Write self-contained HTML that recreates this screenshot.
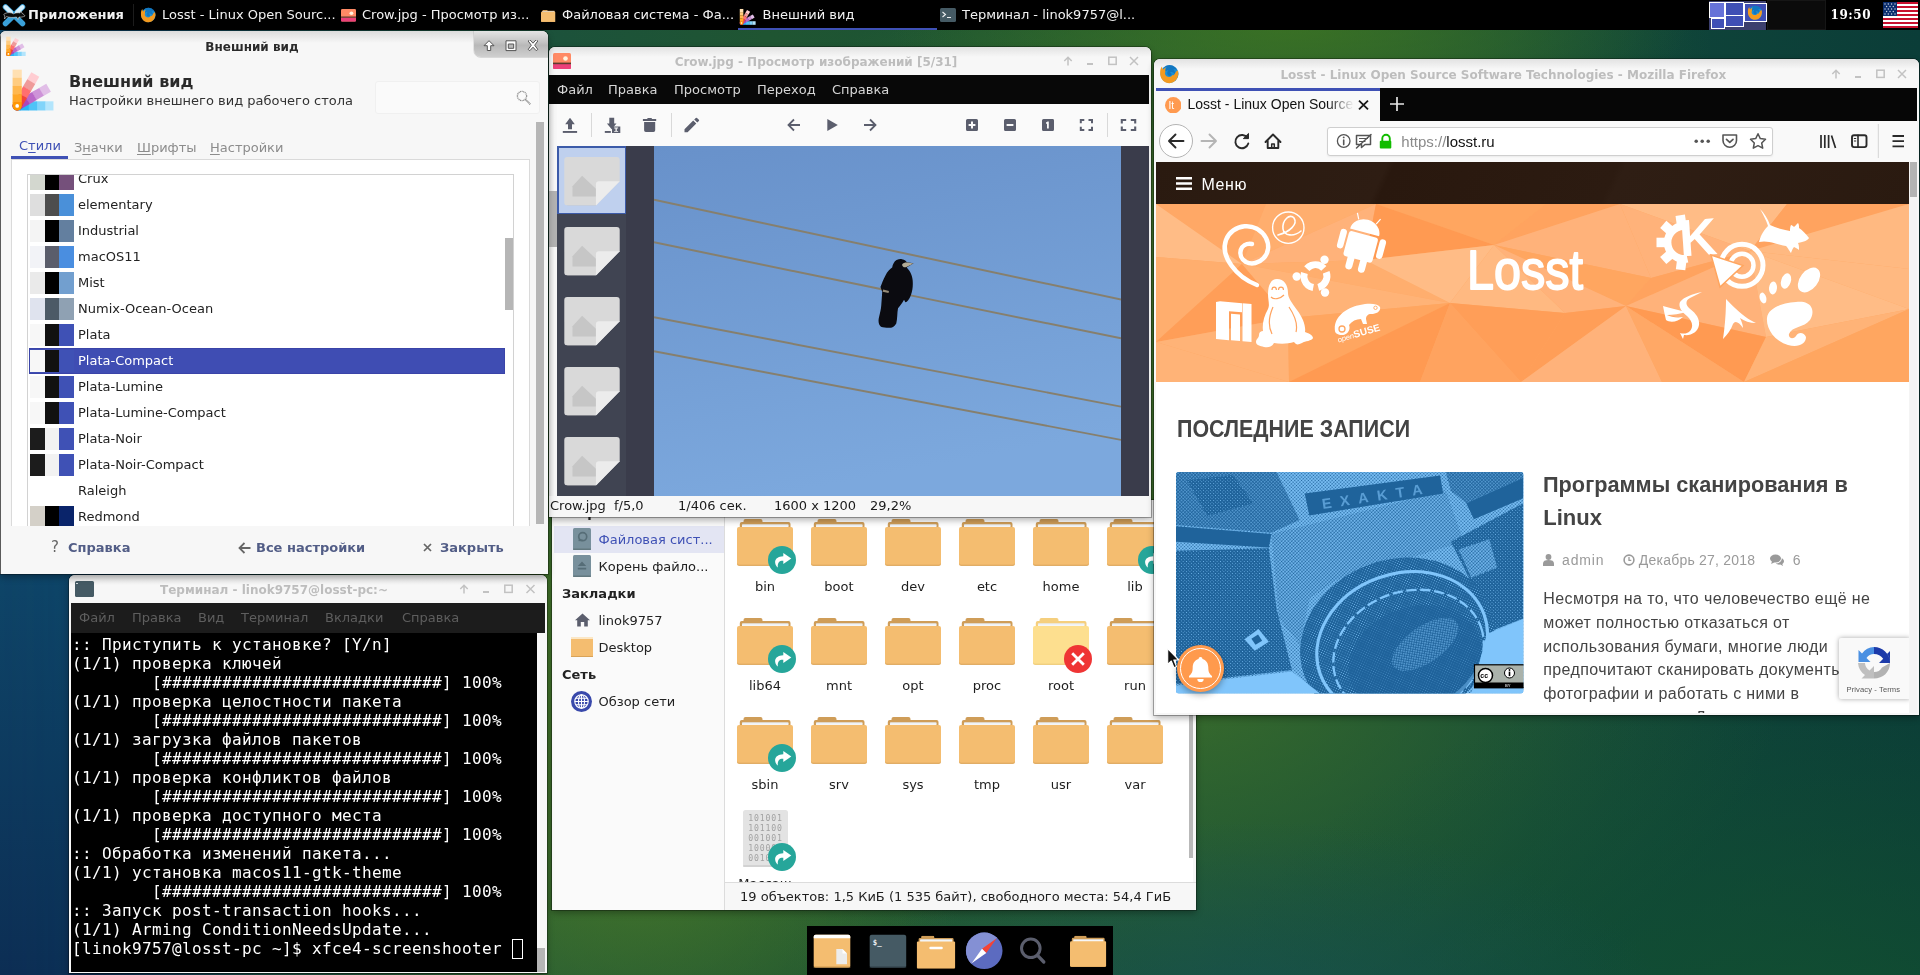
<!DOCTYPE html>
<html lang="ru">
<head>
<meta charset="utf-8">
<title>Desktop</title>
<style>
*{box-sizing:border-box;margin:0;padding:0}
html,body{width:1920px;height:975px;overflow:hidden}
body{position:relative;font-family:"DejaVu Sans","Liberation Sans",sans-serif;font-size:13px;color:#222;
 background:#16513c;}
.abs{position:absolute}
.t{position:absolute;white-space:nowrap;line-height:1}
#bg{left:0;top:0;width:1920px;height:975px;background:linear-gradient(90deg,#0d3560 0%,#0f4660 6%,#1a5040 22%,#1f5532 40%,#1b5336 62%,#10463a 82%,#0b3d38 100%)}
/* ---------- top panel ---------- */
#panel{will-change:transform;left:0;top:0;width:1920px;height:30px;background:#000;color:#fff}
#panel .t{color:#f2f2f2;font-size:13px;top:8px}
/* ---------- generic window ---------- */
.win{position:absolute;will-change:transform;background:#f7f7f7;border-radius:5px 5px 0 0;box-shadow:0 0 0 1px rgba(0,0,0,.3),0 3px 7px rgba(0,0,0,.32)}
.title{position:absolute;font-weight:bold;font-size:12px;color:#bdbdbd;white-space:nowrap;text-align:center;line-height:1}
.wb{position:absolute;width:12px;height:12px}
.wb svg{display:block}

/* ---------- appearance ---------- */
#app{background:#f7f7f7;border-radius:6px 6px 0 0;overflow:hidden}
#app .tgrad{left:0;top:0;width:548px;height:12px;background:linear-gradient(#dcdcdc,#f7f7f7)}
#app .btab{left:474px;top:0;width:74px;height:26px;border-radius:0 6px 0 7px;background:linear-gradient(#e4e4e4 0%,#c2c2c2 45%,#b8b8b8 55%,#cfcfcf 100%);box-shadow:0 1px 0 rgba(0,0,0,.12),-1px 0 0 rgba(0,0,0,.08)}
#app .h1{left:69px;top:43px;font-size:16px;font-weight:bold;color:#2a2a2a}
#app .h2{left:69px;top:63px;font-size:13px;color:#333}
#app .search{left:375px;top:50px;width:165px;height:33px;background:#fafafa;border:1px solid #f0f0f0;border-radius:3px}
#app .vsb{left:536px;top:91px;width:8px;height:402px;background:#b6b6b6}
#app .tab{font-size:13px;color:#8c8c8c;top:110px}
#app .tab u{text-decoration-thickness:1px;text-underline-offset:2px}
#app .nb{left:11px;top:128px;width:519px;height:380px;background:#fff;border:1px solid #dadada}
#app .list{left:27px;top:143px;width:487px;height:360px;background:#fff;border:1px solid #d2d2d2;overflow:hidden}
#app .list .in{position:absolute;left:1px;top:1px;width:485px;height:360px}
#app .row{position:absolute;left:0;width:476px;height:26px}
#app .row.sel{background:#3f4db3;box-shadow:inset 0 0 0 1px #3a44a8}
#app .row .sw{position:absolute;left:1px;top:2px;width:44px;height:22px;display:flex}
#app .row .sw i{display:block;height:22px;width:14.67px}
#app .row .nm{position:absolute;left:49px;top:6px;font-size:13px;line-height:1;color:#222;white-space:nowrap}
#app .row.sel .nm{color:#fff}
#app .isb{left:505px;top:207px;width:8px;height:72px;background:#b6b6b6}
#app .foot{left:0;top:495px;width:548px;height:49px;background:#f7f7f7}
#app .btn{font-weight:bold;font-size:13px;color:#525d86;top:510px}

/* ---------- terminal ---------- */
#term{background:#f7f7f7;border-radius:6px 6px 0 0;overflow:hidden}
.tgrad{position:absolute;left:0;top:0;right:0;height:10px;background:linear-gradient(#e2e2e2,#f7f7f7)}
#term .menu{left:2px;top:28px;width:474px;height:30px;background:#1c1c1c}
#term .menu .t{font-size:13px;color:#5e5e5e;top:8px}
#term .body{left:2px;top:58px;width:466px;height:339px;background:#000}
#term pre{position:absolute;left:1px;top:2px;margin:0;font-family:"DejaVu Sans Mono","Liberation Mono",monospace;font-size:16px;line-height:19px;letter-spacing:0.367px;color:#fff;white-space:pre}
#term .cur{left:440.5px;top:306px;width:11px;height:20px;border:1px solid #fff}
#term .sb{left:468px;top:58px;width:8px;height:339px;background:#f7f7f7}
#term .sbt{left:468px;top:373px;width:8px;height:24px;background:#b6b6b6}

/* ---------- ristretto ---------- */
#rist{background:#f7f7f7;border-radius:6px 6px 0 0;overflow:hidden}
#rist .menu{left:0px;top:28px;width:600px;height:29px;background:#080808}
#rist .menu .t{font-size:13px;color:#d6d6d6;top:8px}
#rist .tb{left:0;top:57px;width:602px;height:42px;background:#fafafa}
#rist .sep{position:absolute;width:1px;height:24px;top:66px;background:#d9d9d9}
#rist .lsb{left:0;top:57px;width:8px;height:392px;background:linear-gradient(90deg,#e2e2e2,#f7f7f7 70%)}
#rist .lsbt{left:0;top:144px;width:8px;height:56px;background:#b2b2b2}
#rist .thumbs{left:8px;top:99px;width:69px;height:350px;background:#404452;overflow:hidden}
#rist .selth{left:0;top:0;width:69px;height:68px;background:#bfd0ee;border:2px solid #3c5ba9;border-bottom-width:1px;border-right-width:1px}
#rist .view{left:77px;top:99px;width:523px;height:350px;background:#3a3c4b;overflow:hidden}
#rist .status{left:0;top:449px;width:602px;height:21px;background:#f7f7f7}
#rist .status .t{font-size:13px;color:#1a1a1a;top:3px}

/* ---------- thunar ---------- */
#thunar{background:#f7f7f7;overflow:hidden;border-radius:0}
#thunar .side{left:0;top:0;width:173px;height:410px;background:#fafafa;border-right:1px solid #dcdcdc}
#thunar .main{left:173px;top:0;width:468px;height:382px;background:#fff;overflow:hidden}
#thunar .sbar{left:173px;top:382px;width:471px;height:28px;background:#f7f7f7;border-top:1px solid #dcdcdc}
#thunar .side .t{font-size:13px;color:#222}
#thunar .side .hd{font-weight:bold;left:10px}
#thunar .lbl{position:absolute;width:74px;text-align:center;font-size:13px;line-height:1;color:#1e1e1e;white-space:nowrap}
#thunar .vsb{left:637px;top:22px;width:4px;height:336px;background:#b9b9b9}

/* ---------- firefox ---------- */
#ff{background:#f7f7f7;border-radius:6px 6px 0 0;overflow:hidden}
#ff .tabs{left:2px;top:29px;width:761px;height:33px;background:#060606}
#ff .tab{left:0;top:0;width:224px;height:33px;background:#f9f9f9;border-top:3px solid #3f51b5}
#ff .nav{left:2px;top:62px;width:761px;height:41px;background:#f9f9f9}
#ff .url{left:171px;top:5.500px;width:446px;height:29.500px;background:#fff;border:1px solid #cfcfcf;border-radius:3px;box-shadow:0 1px 2px rgba(0,0,0,.06)}
#ff .page{left:2px;top:103px;width:753px;height:551px;background:#fff;overflow:hidden;font-family:"Liberation Sans","DejaVu Sans",sans-serif}
#ff .sbar{left:755px;top:103px;width:8px;height:551px;background:#f4f4f4}
#ff .sbt{left:755.500px;top:103px;width:7px;height:35px;background:#b3b3b3}
#ff .smenu{left:0;top:0;width:753px;height:41.600px;background:linear-gradient(115deg,#2a1a10 0%,#2e1d13 30%,#29180e 31%,#2c1b11 60%,#2f1e14 61%,#2a1a10 100%)}
#ff .ban{left:0;top:41.600px;width:753px;height:178px;overflow:hidden}
#ff .body .t{font-size:16px;color:#444;letter-spacing:.377px}
#ff .meta .t{font-size:14px;color:#9a9a9a;letter-spacing:.22px}
</style>
</head>
<body>
<svg width="0" height="0" style="position:absolute"><defs><symbol id="fan" viewBox="0 0 48 48"><g transform="rotate(90 9 43)"><rect x="4.5" y="7.50" width="9" height="8.30" fill="#b3e5fc"/><rect x="4.5" y="15.50" width="9" height="8.30" fill="#81d4fa"/><rect x="4.5" y="23.50" width="9" height="8.30" fill="#4fc3f7"/><rect x="4.5" y="31.50" width="9" height="8.30" fill="#29b6f6"/><path d="M4.5 39.50 h9 v3.50 a4.5 4.5 0 0 1 -9 0 z" fill="#039be5"/></g><g transform="rotate(60 9 43)"><rect x="4.5" y="7.50" width="9" height="8.30" fill="#e1bee7"/><rect x="4.5" y="15.50" width="9" height="8.30" fill="#ce93d8"/><rect x="4.5" y="23.50" width="9" height="8.30" fill="#ba68c8"/><rect x="4.5" y="31.50" width="9" height="8.30" fill="#ab47bc"/><path d="M4.5 39.50 h9 v3.50 a4.5 4.5 0 0 1 -9 0 z" fill="#9c27b0"/></g><g transform="rotate(30 9 43)"><rect x="4.5" y="7.50" width="9" height="8.30" fill="#ffcdd2"/><rect x="4.5" y="15.50" width="9" height="8.30" fill="#ef9a9a"/><rect x="4.5" y="23.50" width="9" height="8.30" fill="#ff6f6f"/><rect x="4.5" y="31.50" width="9" height="8.30" fill="#f44336"/><path d="M4.5 39.50 h9 v3.50 a4.5 4.5 0 0 1 -9 0 z" fill="#e53935"/></g><g transform="rotate(0 9 43)"><rect x="4.5" y="7.50" width="9" height="8.30" fill="#ffe0b2"/><rect x="4.5" y="15.50" width="9" height="8.30" fill="#ffcc80"/><rect x="4.5" y="23.50" width="9" height="8.30" fill="#ffb74d"/><rect x="4.5" y="31.50" width="9" height="8.30" fill="#ffa726"/><path d="M4.5 39.50 h9 v3.50 a4.5 4.5 0 0 1 -9 0 z" fill="#ff9800"/></g><circle cx="9" cy="43" r="1.8" fill="#fff"/></symbol><symbol id="thumb" viewBox="0 0 56 49"><path d="M3 0 H53 a3 3 0 0 1 3 3 V24.5 L32 49 H3 a3 3 0 0 1 -3 -3 V3 a3 3 0 0 1 3 -3 z" fill="#d9d9d9"/><path d="M8.3 40 V29.5 L18 19 L32 32 V40 z" fill="#c6c6c6"/><path d="M32 49 V27.5 a3 3 0 0 1 3 -3 H56 z" fill="#ececec"/><path d="M3 49 H32" stroke="#c4c4c4" stroke-width=".6"/></symbol><symbol id="folder" viewBox="0 0 56 47"><path d="M8.500 0 H23.500 a2 2 0 0 1 2 2 V3 H51.500 a2 2 0 0 1 2 2 V12 H2.800 V5 a2 2 0 0 1 2 -2 H6.500 V2 a2 2 0 0 1 2 -2 Z" fill="#cf9d58"/><path d="M6 5.400 H50.500 a1 1 0 0 1 1 1 V10 H5 V6.400 a1 1 0 0 1 1 -1 Z" fill="#f6f6f6"/><path d="M5 5.400 H51.5 V6.400 H5 Z" fill="#e3edf6" opacity=".8"/><path d="M2 8 H54 a2 2 0 0 1 2 2 V44.500 a2.200 2.200 0 0 1 -2.200 2.200 H2.200 a2.200 2.200 0 0 1 -2.200 -2.200 V10 a2 2 0 0 1 2 -2 Z" fill="#f4bd70"/><path d="M0 44 V44.500 a2.200 2.200 0 0 0 2.200 2.200 H53.800 a2.200 2.200 0 0 0 2.200 -2.200 V44 a2 2 0 0 1 -2 1.800 H2 a2 2 0 0 1 -2 -1.800 Z" fill="#d9a358"/></symbol><symbol id="folderL" viewBox="0 0 56 47"><path d="M8.500 0 H23.500 a2 2 0 0 1 2 2 V3 H51.500 a2 2 0 0 1 2 2 V12 H2.800 V5 a2 2 0 0 1 2 -2 H6.500 V2 a2 2 0 0 1 2 -2 Z" fill="#f5cf7e"/><path d="M6 5.400 H50.500 a1 1 0 0 1 1 1 V10 H5 V6.400 a1 1 0 0 1 1 -1 Z" fill="#f6f6f6"/><path d="M5 5.400 H51.5 V6.400 H5 Z" fill="#e3edf6" opacity=".8"/><path d="M2 8 H54 a2 2 0 0 1 2 2 V44.500 a2.200 2.200 0 0 1 -2.200 2.200 H2.200 a2.200 2.200 0 0 1 -2.200 -2.200 V10 a2 2 0 0 1 2 -2 Z" fill="#fddf8f"/><path d="M0 44 V44.500 a2.200 2.200 0 0 0 2.200 2.200 H53.800 a2.200 2.200 0 0 0 2.200 -2.200 V44 a2 2 0 0 1 -2 1.800 H2 a2 2 0 0 1 -2 -1.800 Z" fill="#ecc873"/></symbol><symbol id="lnk" viewBox="0 0 28 28"><circle cx="14" cy="14" r="14" fill="#26a69a"/><path d="M15.300 7 L23.300 12.400 L15.300 18 V14.800 C11.500 14.600 9.500 16.200 9.800 21.500 C6.500 18.500 4.500 11 15.300 10.200 Z" fill="#fff"/></symbol><symbol id="ffx" viewBox="0 0 20 20"><circle cx="10.500" cy="10" r="9" fill="#1b8fd6"/><path d="M10.500 1 C14 1 17 3 18.500 6 C17 5 15.500 5 14.500 5.500 C16 7 16.500 9 16 11 C15 8 12.500 7.500 11 8.500 C12.500 9 13 10.500 12 11.500 C10.500 12.500 9 11.500 8.500 10.500 C7.500 8.500 9 7 9.500 6 C8 6 7 7 6.500 8 C6 6.500 6.500 4.500 8 3 C6.500 3 5 4 4 5.500 C5 3 7.500 1 10.500 1 Z" fill="#0a64b0" opacity=".55"/><path d="M1.200 8.500 C1 5.500 2 3.500 3 2.500 C3 4 3.500 5 4.500 5.500 C5 4.500 6 3.800 7 3.500 C6 5 6 6.500 6.500 7.500 C5.500 9 6 11.500 8 12.500 C10 13.500 12.500 13 13.500 11 C15 12 15.500 10 16.500 8.500 C17.500 6.500 18.500 6.500 19 7 C20 11 18.500 15.500 15 17.800 C11.500 20 7 19.500 4 16.500 C1.800 14.300 1 11.500 1.200 8.500 Z" fill="#f39a1f"/></symbol><!--SYMS--></defs></svg>
<div id="bg" class="abs"></div>
<svg class="abs" style="left:0;top:0" width="1920" height="975" viewBox="0 0 1920 975"><defs>
<radialGradient id="g1" cx="0" cy="0" r="1" gradientUnits="userSpaceOnUse" gradientTransform="translate(900 480) rotate(-35) scale(950 400)"><stop offset="0" stop-color="#54882a" stop-opacity="1"/><stop offset=".45" stop-color="#4a7c28" stop-opacity=".85"/><stop offset="1" stop-color="#2f6a2a" stop-opacity="0"/></radialGradient>
<radialGradient id="g2" cx="0" cy="0" r="1" gradientUnits="userSpaceOnUse" gradientTransform="translate(1180 680) scale(600 380)"><stop offset="0" stop-color="#3c6e2a" stop-opacity=".9"/><stop offset="1" stop-color="#2a6030" stop-opacity="0"/></radialGradient>
<radialGradient id="g3" cx="0" cy="0" r="1" gradientUnits="userSpaceOnUse" gradientTransform="translate(1250 1020) scale(420 200)"><stop offset="0" stop-color="#17504e" stop-opacity=".9"/><stop offset="1" stop-color="#17504e" stop-opacity="0"/></radialGradient>
<radialGradient id="g6" cx="0" cy="0" r="1" gradientUnits="userSpaceOnUse" gradientTransform="translate(1800 1050) scale(600 380)"><stop offset="0" stop-color="#125030" stop-opacity=".95"/><stop offset="1" stop-color="#125030" stop-opacity="0"/></radialGradient>
<radialGradient id="g7" cx="0" cy="0" r="1" gradientUnits="userSpaceOnUse" gradientTransform="translate(640 850) scale(330 260)"><stop offset="0" stop-color="#44742a" stop-opacity=".9"/><stop offset="1" stop-color="#3a6a2c" stop-opacity="0"/></radialGradient>
<radialGradient id="g8" cx="0" cy="0" r="1" gradientUnits="userSpaceOnUse" gradientTransform="translate(1290 25) scale(400 110)"><stop offset="0" stop-color="#3f7620" stop-opacity=".75"/><stop offset="1" stop-color="#3a7020" stop-opacity="0"/></radialGradient>
<linearGradient id="g4" x1="0" y1="575" x2="0" y2="975" gradientUnits="userSpaceOnUse"><stop offset="0" stop-color="#0e4568"/><stop offset="1" stop-color="#0c2e54"/></linearGradient>
<linearGradient id="g5" x1="0" y1="0" x2="260" y2="0" gradientUnits="userSpaceOnUse"><stop offset="0" stop-color="#fff" stop-opacity="1"/><stop offset=".35" stop-color="#fff" stop-opacity=".9"/><stop offset="1" stop-color="#fff" stop-opacity="0"/></linearGradient>
<mask id="m4"><rect width="300" height="975" fill="url(#g5)"/></mask>
</defs>
<rect width="1920" height="975" fill="url(#g1)"/><rect width="1920" height="975" fill="url(#g2)"/><rect width="1920" height="975" fill="url(#g8)"/><rect width="1920" height="975" fill="url(#g6)"/><rect width="1920" height="975" fill="url(#g7)"/><rect width="1920" height="975" fill="url(#g3)"/>
<rect width="300" height="975" fill="url(#g4)" mask="url(#m4)"/>
</svg>

<!-- ================= THUNAR (lowest) ================= -->
<div id="thunar" class="win" style="left:552px;top:500px;width:644px;height:410px">
<div class="abs side">
 <div class="t hd" style="top:6px">Устройства</div>
 <div class="abs" style="left:2px;top:26px;width:170px;height:27px;background:#e3e5f3"></div>
 <svg class="abs" style="left:21px;top:28px" width="18" height="22" viewBox="0 0 18 22"><rect width="18" height="22" rx="1.500" fill="#78909c"/><rect y="20.500" width="18" height="1.500" rx=".7" fill="#62787f"/><circle cx="9.700" cy="8.700" r="4" fill="none" stroke="#566d77" stroke-width="1.700"/><path d="M5.500 12.300 H9.500" stroke="#566d77" stroke-width="1.700"/></svg>
 <div class="t" style="left:46.500px;top:33px;color:#3f51b5">Файловая сист...</div>
 <svg class="abs" style="left:21px;top:55px" width="18" height="22" viewBox="0 0 18 22"><rect width="18" height="22" rx="1.500" fill="#78909c"/><rect y="20.500" width="18" height="1.500" rx=".7" fill="#62787f"/><path d="M9 6.500 L13.200 11 H4.800 Z M4.800 12.800 H13.200 V14.600 H4.800 Z" fill="#566d77"/></svg>
 <div class="t" style="left:46.500px;top:60px">Корень файло...</div>
 <div class="t hd" style="top:87px">Закладки</div>
 <svg class="abs" style="left:23px;top:113px" width="15" height="14" viewBox="0 0 15 14"><path d="M7.500 .5 L15 7.300 H12.800 V13.500 H9.200 V9 H5.800 V13.500 H2.200 V7.300 H0 Z" fill="#5b5e6d"/></svg>
 <div class="t" style="left:46.500px;top:114px">linok9757</div>
 <svg class="abs" style="left:19px;top:137px" width="22" height="20" viewBox="0 0 22 20"><rect width="22" height="20" rx="1" fill="#f4bd70"/><rect width="22" height="2" fill="#fbe7c6"/><rect y="19" width="22" height="1" fill="#d9a358"/></svg>
 <div class="t" style="left:46.500px;top:141px">Desktop</div>
 <div class="t hd" style="top:168px">Сеть</div>
 <svg class="abs" style="left:19px;top:191px" width="21" height="21" viewBox="0 0 21 21"><circle cx="10.500" cy="10.500" r="10.500" fill="#3949ab"/><g fill="none" stroke="#fff" stroke-width="1.100"><circle cx="10.500" cy="10.500" r="6.700"/><ellipse cx="10.500" cy="10.500" rx="3" ry="6.700"/><path d="M10.500 3.800 V17.200 M3.800 10.500 H17.200 M4.700 7.200 H16.300 M4.700 13.800 H16.300"/></g></svg>
 <div class="t" style="left:46.500px;top:195px">Обзор сети</div>
</div>
<div class="abs main"><svg class="abs" style="left:12px;top:19px" width="56" height="47"><use href="#folder"/></svg>
<svg class="abs" style="left:43px;top:46px" width="28" height="28"><use href="#lnk"/></svg>
<div class="lbl" style="left:3px;top:80px">bin</div>
<svg class="abs" style="left:86px;top:19px" width="56" height="47"><use href="#folder"/></svg>
<div class="lbl" style="left:77px;top:80px">boot</div>
<svg class="abs" style="left:160px;top:19px" width="56" height="47"><use href="#folder"/></svg>
<div class="lbl" style="left:151px;top:80px">dev</div>
<svg class="abs" style="left:234px;top:19px" width="56" height="47"><use href="#folder"/></svg>
<div class="lbl" style="left:225px;top:80px">etc</div>
<svg class="abs" style="left:308px;top:19px" width="56" height="47"><use href="#folder"/></svg>
<div class="lbl" style="left:299px;top:80px">home</div>
<svg class="abs" style="left:382px;top:19px" width="56" height="47"><use href="#folder"/></svg>
<svg class="abs" style="left:413px;top:46px" width="28" height="28"><use href="#lnk"/></svg>
<div class="lbl" style="left:373px;top:80px">lib</div>
<svg class="abs" style="left:12px;top:118px" width="56" height="47"><use href="#folder"/></svg>
<svg class="abs" style="left:43px;top:145px" width="28" height="28"><use href="#lnk"/></svg>
<div class="lbl" style="left:3px;top:179px">lib64</div>
<svg class="abs" style="left:86px;top:118px" width="56" height="47"><use href="#folder"/></svg>
<div class="lbl" style="left:77px;top:179px">mnt</div>
<svg class="abs" style="left:160px;top:118px" width="56" height="47"><use href="#folder"/></svg>
<div class="lbl" style="left:151px;top:179px">opt</div>
<svg class="abs" style="left:234px;top:118px" width="56" height="47"><use href="#folder"/></svg>
<div class="lbl" style="left:225px;top:179px">proc</div>
<svg class="abs" style="left:308px;top:118px" width="56" height="47"><use href="#folderL"/></svg>
<svg class="abs" style="left:339px;top:145px" width="28" height="28" viewBox="0 0 28 28"><circle cx="14" cy="14" r="14" fill="#ef3535"/><path d="M8.200 8.200 L19.800 19.800 M19.800 8.200 L8.200 19.800" stroke="#fff" stroke-width="2.800" fill="none"/></svg>
<div class="lbl" style="left:299px;top:179px">root</div>
<svg class="abs" style="left:382px;top:118px" width="56" height="47"><use href="#folder"/></svg>
<div class="lbl" style="left:373px;top:179px">run</div>
<svg class="abs" style="left:12px;top:217px" width="56" height="47"><use href="#folder"/></svg>
<svg class="abs" style="left:43px;top:244px" width="28" height="28"><use href="#lnk"/></svg>
<div class="lbl" style="left:3px;top:278px">sbin</div>
<svg class="abs" style="left:86px;top:217px" width="56" height="47"><use href="#folder"/></svg>
<div class="lbl" style="left:77px;top:278px">srv</div>
<svg class="abs" style="left:160px;top:217px" width="56" height="47"><use href="#folder"/></svg>
<div class="lbl" style="left:151px;top:278px">sys</div>
<svg class="abs" style="left:234px;top:217px" width="56" height="47"><use href="#folder"/></svg>
<div class="lbl" style="left:225px;top:278px">tmp</div>
<svg class="abs" style="left:308px;top:217px" width="56" height="47"><use href="#folder"/></svg>
<div class="lbl" style="left:299px;top:278px">usr</div>
<svg class="abs" style="left:382px;top:217px" width="56" height="47"><use href="#folder"/></svg>
<div class="lbl" style="left:373px;top:278px">var</div>
<svg class="abs" style="left:17.5px;top:310px" width="45" height="57" viewBox="0 0 45 57"><rect width="45" height="57" rx="2.500" fill="#e3e3e3"/><rect y="55" width="45" height="2" rx="1" fill="#d2d2d2"/><g font-family="DejaVu Sans Mono,Liberation Mono,monospace" font-size="8.200" fill="#a2a2a2" letter-spacing=".85"><text x="5.200" y="11.300">101001</text><text x="5.200" y="21.300">101100</text><text x="5.200" y="31.300">001001</text><text x="5.200" y="41.300">100001</text><text x="5.200" y="51.300">001010</text></g></svg>
<svg class="abs" style="left:43px;top:343px" width="28" height="28"><use href="#lnk"/></svg>
<div class="lbl" style="left:3px;top:377px">Массаш</div></div>
<div class="abs vsb"></div>
<div class="abs sbar"><div class="t" style="left:15px;top:7px;font-size:13px;color:#1e1e1e">19 объектов: 1,5 КиБ (1 535 байт), свободного места: 54,4 ГиБ</div></div>
</div>

<!-- ================= RISTRETTO ================= -->
<div id="rist" class="win" style="left:549px;top:47px;width:602px;height:470px">
<div class="tgrad"></div>
<svg class="abs" style="left:4px;top:6px" width="18" height="16" viewBox="0 0 18 16"><rect width="18" height="16" rx="1.5" fill="#ff8a65"/><rect y="11" width="18" height="5" rx="1" fill="#ec407a"/><rect y="9.6" width="18" height="1.6" fill="#5d3a2e"/><circle cx="12.5" cy="5.5" r="2.3" fill="#fff3e0"/></svg>
<div class="title" style="left:60px;width:414px;top:9px">Crow.jpg - Просмотр изображений [5/31]</div>
<svg class="abs" style="left:514px;top:9px" width="78" height="10" viewBox="0 0 78 10"><g fill="none" stroke="#c2c2c2" stroke-width="1.5">
 <path d="M5 9.5 V1.5 M1.3 5 L5 1.3 L8.7 5"/>
 <path d="M24 8 H30" stroke-width="2"/>
 <rect x="45.8" y="1.2" width="7.4" height="7.2"/>
 <path d="M67 1 L75 9 M75 1 L67 9"/>
</g></svg>
<div class="abs menu">
 <div class="t" style="left:8px">Файл</div><div class="t" style="left:59px">Правка</div><div class="t" style="left:125px">Просмотр</div><div class="t" style="left:208px">Переход</div><div class="t" style="left:283px">Справка</div>
</div>
<div class="abs tb"></div>
<svg class="abs" style="left:0;top:57px" width="602" height="42" viewBox="0 0 602 42"><g fill="#5b5e6d">
 <path d="M21 13.700 L25.800 20.300 H23 V25.300 H19 V20.300 H16.200 Z"/><rect x="13.800" y="27" width="14.300" height="1.900"/>
 <path d="M60.300 13.700 H65.200 V19.500 H67.500 L62.700 25.300 L57.900 19.500 H60.300 Z"/><rect x="55.800" y="27" width="6" height="1.900"/><path fill-rule="evenodd" d="M63 22.400 H71.300 V28.900 H63 Z M65.200 23.500 V24.400 H66.500 V26.900 H65.200 V27.800 H69.100 V26.900 H67.800 V24.400 H69.100 V23.500 Z"/>
 <path d="M95.100 18.100 H106.200 V26.300 a1.700 1.700 0 0 1 -1.700 1.700 H96.800 a1.700 1.700 0 0 1 -1.700 -1.700 Z M93.900 15 H98 L98.800 14.100 H102.400 L103.200 15 H107.200 V16.900 H93.900 Z"/>
 <path d="M135.500 25.200 V28.300 H138.600 L147.300 19.600 L144.200 16.500 Z M149.900 17 a.9 .9 0 0 0 0 -1.200 L148 13.900 a.9 .9 0 0 0 -1.200 0 L145.200 15.500 L148.300 18.600 Z"/>
 <path d="M828.5 14 z"/>
 <path d="M278.300 15 L288.800 21 L278.300 27 Z"/>
 <path fill-rule="evenodd" d="M418.5 15 H427.5 a1.5 1.5 0 0 1 1.5 1.5 V25.5 a1.5 1.5 0 0 1 -1.5 1.5 H418.5 a1.5 1.5 0 0 1 -1.5 -1.5 V16.500 a1.5 1.5 0 0 1 1.5 -1.5 Z M422 17.6 V20 H419.6 V22 H422 V24.400 H424 V22 H426.400 V20 H424 V17.6 Z"/>
 <path fill-rule="evenodd" d="M456.5 15 H465.5 a1.5 1.5 0 0 1 1.5 1.5 V25.5 a1.5 1.5 0 0 1 -1.5 1.5 H456.5 a1.5 1.5 0 0 1 -1.5 -1.5 V16.500 a1.5 1.5 0 0 1 1.5 -1.5 Z M457.600 20 H464.400 V22 H457.600 Z"/>
 <path fill-rule="evenodd" d="M494.5 15 H503.5 a1.5 1.5 0 0 1 1.5 1.5 V25.5 a1.5 1.5 0 0 1 -1.5 1.5 H494.5 a1.5 1.5 0 0 1 -1.5 -1.5 V16.500 a1.5 1.5 0 0 1 1.5 -1.5 Z M499.8 17.5 H498.600 L497 18.600 V20 L498 19.5 V24.500 H499.800 Z"/>
</g>
<g fill="none" stroke="#5b5e6d" stroke-width="1.8">
 <path d="M245 15.5 L239.500 21 L245 26.500 M240 21 H251"/>
 <path d="M321 15.500 L326.500 21 L321 26.500 M326 21 H315"/>
 <path d="M531.800 19.300 V16 H535.300 M539.500 16 H543 V19.300 M543 22.700 V26 H539.500 M535.300 26 H531.800 V22.700" stroke-width="2"/>
 <path d="M572.800 19.500 V16 H577.200 M581.800 16 H586.200 V19.500 M586.200 22.500 V26 H581.800 M577.200 26 H572.800 V22.500" stroke-width="2.100"/>
</g></svg>
<div class="sep" style="left:42px"></div><div class="sep" style="left:122px"></div><div class="sep" style="left:558px"></div>
<div class="abs lsb"></div><div class="abs lsbt"></div>
<div class="abs thumbs"><div class="abs selth"></div><svg class="abs" style="left:6.5px;top:11px" width="56" height="48.500"><use href="#thumb"/></svg><svg class="abs" style="left:6.5px;top:81px" width="56" height="48.500"><use href="#thumb"/></svg><svg class="abs" style="left:6.5px;top:151px" width="56" height="48.500"><use href="#thumb"/></svg><svg class="abs" style="left:6.5px;top:221px" width="56" height="48.500"><use href="#thumb"/></svg><svg class="abs" style="left:6.5px;top:291px" width="56" height="48.500"><use href="#thumb"/></svg></div>
<div class="abs view">
 <svg class="abs" style="left:28px;top:0" width="467" height="350" viewBox="654 146 467 350">
  <defs><linearGradient id="sky" x1="0" y1="0" x2=".25" y2="1"><stop offset="0" stop-color="#6891ca"/><stop offset="1" stop-color="#7ca8dd"/></linearGradient></defs>
  <rect x="654" y="146" width="467" height="350" fill="url(#sky)"/>
  <g stroke="#867f6d" stroke-width="1.9" fill="none">
   <path d="M654 199.800 L1121 299.500"/><path d="M654 242.300 L889 290.800 M910.500 295.400 L1121 338.300"/><path d="M654 317.300 L1121 406.600"/><path d="M654 351.200 L1121 439.900"/>
  </g>
  <g transform="translate(860 245) scale(.09747)">
   <path d="M430 145 C460 150 475 165 480 178 L550 188 L490 222 L478 230 C505 255 535 300 540 360 C545 420 540 470 520 520 C505 555 485 585 465 588 L452 562 C430 600 405 630 390 650 C380 700 385 760 372 805 C355 840 320 852 295 850 C265 845 240 850 215 838 C190 820 185 780 195 740 C205 700 215 660 218 620 C222 570 225 520 228 480 L210 432 C225 390 240 350 260 315 C280 275 310 245 330 232 C335 200 350 170 375 155 C395 145 415 142 430 145 Z" fill="#0b0b10"/>
   <path d="M432 200 C445 180 470 176 490 180 L548 189 L492 218 L470 228 C450 232 432 222 432 200 Z" fill="#b3ab96"/>
   <path d="M235 468 L295 482" stroke="#968c78" stroke-width="22"/>
  </g>
 </svg>
</div>
<div class="abs status">
 <div class="t" style="left:1px">Crow.jpg</div><div class="t" style="left:65px">f/5,0</div><div class="t" style="left:129px">1/406 сек.</div><div class="t" style="left:225px">1600 x 1200</div><div class="t" style="left:321px">29,2%</div>
</div>
</div>

<!-- ================= FIREFOX ================= -->
<div id="ff" class="win" style="left:1154px;top:59px;width:765px;height:656px">
<div class="tgrad"></div>
<svg class="abs" style="left:5px;top:5px" width="20" height="20" viewBox="0 0 20 20"><circle cx="10.500" cy="10" r="9" fill="#1b8fd6"/><path d="M10.500 1 C14 1 17 3 18.500 6 C17 5 15.500 5 14.500 5.500 C16 7 16.500 9 16 11 C15 8 12.500 7.500 11 8.500 C12.500 9 13 10.500 12 11.500 C10.500 12.500 9 11.500 8.500 10.500 C7.500 8.500 9 7 9.500 6 C8 6 7 7 6.500 8 C6 6.500 6.500 4.500 8 3 C6.500 3 5 4 4 5.500 C5 3 7.500 1 10.500 1 Z" fill="#0a64b0" opacity=".55"/><path d="M1.200 8.500 C1 5.500 2 3.500 3 2.500 C3 4 3.500 5 4.500 5.500 C5 4.500 6 3.800 7 3.500 C6 5 6 6.500 6.500 7.500 C5.500 9 6 11.500 8 12.500 C10 13.500 12.500 13 13.500 11 C15 12 15.500 10 16.500 8.500 C17.500 6.500 18.500 6.500 19 7 C20 11 18.500 15.500 15 17.800 C11.500 20 7 19.500 4 16.500 C1.800 14.300 1 11.500 1.200 8.500 Z" fill="#f39a1f"/></svg>
<div class="title" style="left:99.400px;width:500px;top:10px">Losst - Linux Open Source Software Technologies - Mozilla Firefox</div>
<svg class="abs" style="left:677.200px;top:10px" width="78" height="10" viewBox="0 0 78 10"><g fill="none" stroke="#c2c2c2" stroke-width="1.500">
 <path d="M5 9.500 V1.500 M1.300 5 L5 1.300 L8.700 5"/>
 <path d="M24 8 H30" stroke-width="2"/>
 <rect x="45.800" y="1.200" width="7.400" height="7.200"/>
 <path d="M67 1 L75 9 M75 1 L67 9"/>
</g></svg>
<div class="abs tabs"><div class="abs tab"></div>
 <svg class="abs" style="left:8.800px;top:8.700px" width="16.500" height="16.500" viewBox="0 0 16.500 16.500"><circle cx="8.250" cy="8.250" r="8.250" fill="#ff9a50"/><text x="3.800" y="12" font-family="Liberation Sans,sans-serif" font-size="10.500" fill="#fff">lt</text></svg>
 <div class="abs" style="left:31.500px;top:8px;width:166px;height:18px;overflow:hidden"><div class="t" style="left:0;top:1px;font-family:'Liberation Sans',sans-serif;font-size:14px;color:#111">Losst - Linux Open Source Software Technologies</div></div>
 <div class="abs" style="left:172px;top:6px;width:26px;height:24px;background:linear-gradient(90deg,rgba(249,249,249,0),#f9f9f9)"></div>
 <svg class="abs" style="left:201.500px;top:12.300px" width="11" height="10" viewBox="0 0 11 10"><path d="M1 .700 L10 9.300 M10 .700 L1 9.300" stroke="#1a1a1a" stroke-width="1.800" fill="none"/></svg>
 <svg class="abs" style="left:234px;top:9px" width="14" height="14" viewBox="0 0 14 14"><path d="M7 0 V14 M0 7 H14" stroke="#e6e6e6" stroke-width="1.700" fill="none"/></svg>
</div>
<div class="abs nav">
 <div class="abs url"></div>
 <div class="abs" style="left:3px;top:3px;width:34px;height:34px;border-radius:50%;background:#fff;border:1px solid #b4b4b4"></div>
 <svg class="abs" style="left:0;top:0" width="761" height="41" viewBox="0 0 761 41"><g fill="none" stroke="#2a2a2a" stroke-width="1.900" stroke-linecap="round" stroke-linejoin="round">
  <path d="M19.500 13.500 L13 20 L19.500 26.500 M13.300 20 H27.500"/>
  <path d="M53.500 13.500 L60 20 L53.500 26.500 M59.700 20 H45.500" stroke="#b5b5b5"/>
  <path d="M91.500 17 A6.600 6.600 0 1 0 92.300 22.500"/><path d="M92.500 12.800 V17.600 H87.700 Z" fill="#2a2a2a" stroke-width="1"/>
  <path d="M109.500 21 L117 13.500 L124.500 21 M111.700 19.500 V27 H122.300 V19.500"/><path d="M115.700 27 V23 H118.300 V27" stroke-width="1.500"/>
  <circle cx="187.700" cy="20" r="6.300" stroke="#555" stroke-width="1.300"/><path d="M187.700 19 V23.600" stroke="#555" stroke-width="1.600"/><circle cx="187.700" cy="16.400" r=".95" fill="#555" stroke="none"/>
  <path d="M200.500 14.500 H214.500 V23.500 H209 L205.500 26.500 V23.500 H200.500 Z" stroke="#555" stroke-width="1.500"/><path d="M203.500 17.500 H211.500 M203.500 20.500 H209" stroke="#555" stroke-width="1.200"/><path d="M200.500 27 L215 13.500" stroke="#555" stroke-width="1.500"/>
  <g fill="#555" stroke="none"><circle cx="540.200" cy="20.300" r="1.750"/><circle cx="546.200" cy="20.300" r="1.750"/><circle cx="552.200" cy="20.300" r="1.750"/></g>
  <path d="M567 14 H580.500 V19.500 A6.750 6.750 0 0 1 567 19.500 Z" stroke="#555" stroke-width="1.600"/><path d="M570.500 18.300 L573.750 21.300 L577 18.300" stroke="#555" stroke-width="1.700"/>
  <path d="M602 12.800 L604.300 17.600 L609.500 18.300 L605.700 22 L606.700 27.200 L602 24.700 L597.300 27.200 L598.300 22 L594.500 18.300 L599.700 17.600 Z" stroke="#555" stroke-width="1.500"/>
  <path d="M665 14 V27 M668.800 14 V27 M672.600 14 V27 M675.500 14.500 L679.500 27" stroke-width="1.700" stroke-linecap="butt"/>
  <rect x="696" y="14.300" width="14.500" height="11.800" rx="2"/><path d="M702 14.300 V26" stroke-width="1.600"/><path d="M698.300 17.500 H699.800 M698.300 20 H699.800" stroke-width="1"/>
  <path d="M736.500 15 H748 M736.500 20.200 H748 M736.500 25.400 H748" stroke-width="1.800" stroke-linecap="butt"/>
 </g>
 <path d="M225.800 19.800 H234.300 a1 1 0 0 1 1 1 V26.500 a1 1 0 0 1 -1 1 H224.800 a1 1 0 0 1 -1 -1 V20.800 a1 1 0 0 1 1 -1 Z" fill="#12bc00"/><path d="M226.300 20 V17.500 a3.750 3.750 0 0 1 7.500 0 V20" fill="none" stroke="#12bc00" stroke-width="1.900"/>
 <path d="M722.300 3 V37" stroke="#d4d4d4" stroke-width="1"/>
 </svg>
 <div class="t" style="left:245.300px;top:12.500px;font-family:'Liberation Sans',sans-serif;font-size:15px;color:#8a8a8a">https://<span style="color:#111">losst.ru</span></div>
</div>
<div class="abs page">
 <div class="abs smenu"></div>
 <svg class="abs" style="left:19.800px;top:15.200px" width="16.200" height="13" viewBox="0 0 16.200 13"><path d="M0 1.300 H16.200 M0 6.500 H16.200 M0 11.700 H16.200" stroke="#fff" stroke-width="2.500"/></svg>
 <div class="t" style="left:45.500px;top:14.500px;font-size:16px;color:#fff;letter-spacing:.55px">Меню</div>
 <div class="abs ban"><svg class="abs" style="left:0;top:0" width="753" height="178" viewBox="0 0 753 178"><rect width="753" height="178" fill="#ffa762"/><path d="M0 0 L110 0 L86 60 Z" fill="#ffa866"/><path d="M0 0 L86 60 L0 53 Z" fill="#ffbc86"/><path d="M110 0 L220 0 L86 60 Z" fill="#ffae6e"/><path d="M220 0 L209 56 L86 60 Z" fill="#ffb27a"/><path d="M220 0 L390 0 L338 41 Z" fill="#ffa660"/><path d="M220 0 L338 41 L209 56 Z" fill="#ff9a52"/><path d="M390 0 L464 0 L338 41 Z" fill="#ffa35f"/><path d="M464 0 L495 74 L338 41 Z" fill="#ffb27a"/><path d="M464 0 L631 0 L594 47 Z" fill="#ffbc86"/><path d="M464 0 L594 47 L495 74 Z" fill="#ffb27a"/><path d="M631 0 L753 0 L594 47 Z" fill="#ffa35f"/><path d="M753 0 L753 65 L594 47 Z" fill="#ffb981"/><path d="M0 53 L86 60 L0 138 Z" fill="#ffae6e"/><path d="M86 60 L132 114 L0 138 Z" fill="#ff9e58"/><path d="M86 60 L209 56 L294 99 Z" fill="#ffae6e"/><path d="M86 60 L294 99 L132 114 Z" fill="#ffb377"/><path d="M209 56 L338 41 L294 99 Z" fill="#ffbc86"/><path d="M338 41 L409 109 L294 99 Z" fill="#ffb981"/><path d="M338 41 L495 74 L470 102 Z" fill="#ffa660"/><path d="M338 41 L470 102 L409 109 Z" fill="#ffb27a"/><path d="M495 74 L594 47 L470 102 Z" fill="#ffa35f"/><path d="M594 47 L610 133 L470 102 Z" fill="#ffb27a"/><path d="M594 47 L753 65 L753 105 Z" fill="#ffb981"/><path d="M594 47 L753 105 L610 133 Z" fill="#ffbc86"/><path d="M0 138 L132 114 L133 178 Z" fill="#ffb377"/><path d="M0 138 L133 178 L0 178 Z" fill="#ffb377"/><path d="M132 114 L294 99 L133 178 Z" fill="#ffa660"/><path d="M294 99 L264 178 L133 178 Z" fill="#ff9a52"/><path d="M294 99 L409 109 L365 178 Z" fill="#ff9e58"/><path d="M294 99 L365 178 L264 178 Z" fill="#ffa35f"/><path d="M409 109 L470 102 L365 178 Z" fill="#ff9e58"/><path d="M470 102 L506 178 L365 178 Z" fill="#ffb27a"/><path d="M470 102 L610 133 L588 178 Z" fill="#ff9a52"/><path d="M470 102 L588 178 L506 178 Z" fill="#ffa866"/><path d="M610 133 L753 105 L588 178 Z" fill="#ffb377"/><path d="M753 105 L753 178 L588 178 Z" fill="#ffa660"/>
<g fill="none" stroke="#fff" stroke-linecap="round">
 <path d="M101 81 C80 73 64 52 70 36 C76 20 100 16 110 34 C118 50 102 64 90 58 C80 52 84 38 96 40" stroke-width="4.500"/>
 <circle cx="132.300" cy="23.700" r="15.700" stroke-width="1.400"/>
 <path d="M122 31 C134 28 142 20 138 14 C134 9 126 16 127 25 C128 32 138 33 145 27" stroke-width="1.600"/>
</g>
<g fill="#fff">
 <g transform="rotate(15 206 38)">
  <path d="M191 28 a15 13 0 0 1 30 0 Z"/><rect x="191" y="30" width="30" height="26" rx="3"/><rect x="182.500" y="30" width="6.500" height="20" rx="3.200"/><rect x="223" y="30" width="6.500" height="20" rx="3.200"/><rect x="196" y="52" width="7" height="16" rx="3.500"/><rect x="209" y="52" width="7" height="16" rx="3.500"/>
  <path d="M197 17 L194 11 M215 17 L218 11" stroke="#fff" stroke-width="1.200"/>
 </g>
 <circle cx="159.400" cy="72.200" r="11.500" fill="none" stroke="#fff" stroke-width="7" stroke-dasharray="19.080 5" transform="rotate(-20 159.400 72.200)"/>
 <circle cx="140.700" cy="72.500" r="4.200"/><circle cx="168.500" cy="55.800" r="4.200"/><circle cx="169" cy="88.500" r="4.200"/>
 <path d="M121 75 C128 75 132 81 132 89 C132 94 136 99 141 106 C147 114 150 122 149 128 C152 129 157 131 157 134 C156 137 149 137 146 139 C142 141 140 141 138 138 C132 140 124 140 118 139 C116 143 112 144 108 143 C104 142 100 141 100 138 C100 135 103 134 103 131 C103 128 105 127 107 127 C106 120 108 112 112 105 C114 101 112 96 112 90 C112 81 115 75 121 75 Z"/>
 <path d="M116 86 a2.200 2.800 0 0 1 4.400 0 M122.500 86 a2.500 2.800 0 0 1 5 0 M115 93 C118 96 124 95 128 91 M117 103 C113 112 112 122 116 130 M133 103 C139 112 142 120 140 128" stroke="#ffa35f" stroke-width="1.200" fill="none"/>
 <g transform="translate(60 97) skewY(5)"><path d="M4 0 H26 V9 H13 V38 H0 V1 Z"/><rect x="15" y="11.500" width="9" height="26.500"/><rect x="26.500" y="0" width="9" height="38"/></g>
 <path d="M179 127 C177 115 188 104 204 101 C212 99 221 99 224 103 C225 107 221 110 215 110 C212 110 210 112 210 115 L211 120 L207 120 L205 115 C200 115 196 117 193 121 C195 126 191 131 186 131 C182 131 179 129 179 127 Z"/>
 <circle cx="186" cy="125" r="3" fill="none" stroke="#ffa660" stroke-width="1.300"/><circle cx="219.500" cy="103.800" r="1.700" fill="none" stroke="#ffa660" stroke-width=".9"/>
 <text x="0" y="0" transform="translate(182.500 138.500) rotate(-16)" font-family="Liberation Sans,sans-serif" font-size="7.500" font-style="italic">open<tspan font-size="10" font-weight="bold" font-style="normal">SUSE</tspan></text>
 <text x="311" y="85" font-family="Liberation Sans,sans-serif" font-size="56" textLength="116" lengthAdjust="spacingAndGlyphs" stroke="#fff" stroke-width="1.800" stroke-linejoin="round">Losst</text>
 <!-- KDE -->
 <path d="M532.3 58.6 A20.5 20.5 0 1 1 532.3 18.4 L530.6 26.3 A12.5 12.5 0 1 0 530.6 50.7 Z"/><rect x="546.5" y="33.8" width="9" height="9.500" transform="rotate(97 528.0 38.5)"/><rect x="546.5" y="33.8" width="9" height="9.500" transform="rotate(139 528.0 38.5)"/><rect x="546.5" y="33.8" width="9" height="9.500" transform="rotate(180 528.0 38.5)"/><rect x="546.5" y="33.8" width="9" height="9.500" transform="rotate(221 528.0 38.5)"/><rect x="546.5" y="33.8" width="9" height="9.500" transform="rotate(262 528.0 38.5)"/>
 <text x="0" y="0" transform="translate(524.500 52.500) rotate(-4)" font-family="Liberation Sans,sans-serif" font-size="52" font-weight="bold">K</text>
 <!-- xfce mouse -->
 <path d="M604 5 C608 12 611 18 612 22 C606 28 604 34 603 38 C612 36 620 40 630 42 C632 44 634 48 635 49 C636 46 637 44 638 43 C640 44 642 45 643 46 C643 43 643 41 642 39 C648 38 652 36 653 34 C650 30 646 26 643 24 C643 22 643 20 642 19 C640 21 639 22 638 23 C637 22 636 21 635 21 C634 23 634 25 634 27 C628 26 620 24 614 21 C612 15 608 9 604 5 Z"/>
 <!-- target -->
 <circle cx="586" cy="61.300" r="21" fill="none" stroke="#fff" stroke-width="5"/><circle cx="586" cy="61.300" r="11.500" fill="none" stroke="#fff" stroke-width="4.500"/>
 <path d="M555 51 L587 61.500 L564 83 Z" stroke="#ffa660" stroke-width="1.500"/>
 <!-- bird -->
 <path d="M546 88 C536 90 528 93 524 98 C522 103 526 108 531 112 C536 117 538 122 534 127 C531 130 527 130 524 129 L527 135 L528 131 C535 132 542 128 543 121 C544 113 538 108 533 104 C529 100 530 96 534 94 C538 92 542 90 546 88 Z"/>
 <path d="M507 102 C514 104 522 106 530 108 C524 110 517 111 511 111 C515 113 521 114 527 113 C522 118 514 119 510 116 C509 112 508 107 507 102 Z"/>
 <!-- arch -->
 <path d="M570 95 C580 106 592 116 600 119 C594 119 588 117 584 114 C586 118 587 122 587 124 C583 118 579 116 577 120 C575 126 571 131 567 135 C569 122 570 108 570 95 Z"/>
 <!-- gnome -->
 <ellipse cx="653" cy="76" rx="9" ry="14" transform="rotate(38 653 76)"/><ellipse cx="630" cy="77" rx="4.800" ry="8" transform="rotate(18 630 77)"/><ellipse cx="617" cy="84" rx="4" ry="6.500" transform="rotate(5 617 84)"/><ellipse cx="607" cy="94" rx="3.300" ry="5.500" transform="rotate(-15 607 94)"/>
 <path d="M640 98 C655 96 660 106 654 116 C648 124 636 122 633 130 C632 134 637 136 640 132 C642 128 648 128 650 133 C650 140 642 144 632 141 C618 137 610 124 611 114 C612 104 626 99 640 98 Z"/>
</g>
</svg></div>
 <div class="t" style="left:21.400px;top:255px;font-size:24px;font-weight:bold;color:#444;transform-origin:0 0;transform:scaleX(.893)">ПОСЛЕДНИЕ ЗАПИСИ</div>
</div>
<div class="abs" style="left:2px;top:103px;width:753px;height:551px;overflow:hidden;font-family:'Liberation Sans','DejaVu Sans',sans-serif">
 <svg class="abs" style="left:20px;top:310.200px" width="347.500" height="221.500" viewBox="0 0 347.500 221.500">
<defs>
 <pattern id="htD" width="9.360" height="9.360" patternUnits="userSpaceOnUse" patternTransform="rotate(45)"><rect width="9.360" height="9.360" fill="#1f639b"/><circle cx="4.680" cy="4.680" r="1.90" fill="#80c5fb"/></pattern>
 <pattern id="htM" width="9.360" height="9.360" patternUnits="userSpaceOnUse" patternTransform="rotate(45)"><rect width="9.360" height="9.360" fill="#80c5fb"/><circle cx="4.680" cy="4.680" r="4.60" fill="#1f639b"/></pattern>
 <pattern id="htL" width="9.360" height="9.360" patternUnits="userSpaceOnUse" patternTransform="rotate(45)"><rect width="9.360" height="9.360" fill="#80c5fb"/><circle cx="4.680" cy="4.680" r="3.60" fill="#1f639b"/></pattern>
 <pattern id="htV" width="9.360" height="9.360" patternUnits="userSpaceOnUse" patternTransform="rotate(45)"><rect width="9.360" height="9.360" fill="#80c5fb"/><circle cx="4.680" cy="4.680" r="3" fill="#1f639b"/></pattern>
 <clipPath id="camclip"><rect width="347.500" height="221.500" rx="3"/></clipPath>
</defs>
<g clip-path="url(#camclip)"><rect width="347.500" height="221.500" fill="#80c5fb"/><g transform="scale(.25641)"><rect width="1356" height="864" fill="url(#htV)"/></g>
<g transform="scale(.25641) translate(-78 -28)">
 <path d="M78 28 H470 L560 215 L450 265 L78 235 Z" fill="url(#htM)"/>
 <path d="M120 60 L300 40 L380 150 L200 200 Z" fill="url(#htD)"/>
 <path d="M450 270 L1130 100 L1200 300 L700 450 L600 520 L560 700 L480 600 Z" fill="url(#htL)"/>
 <path d="M78 240 L450 270 L440 322 L78 300 Z" fill="#1f639b"/>
 <path d="M78 335 L440 325 L470 560 L530 800 L270 830 L78 855 Z" fill="url(#htD)"/>
 <path d="M1130 28 H1432 V50 L1210 150 L1150 100 Z" fill="url(#htM)"/>
 <path d="M1210 150 L1432 50 V130 L1240 212 Z" fill="#1f639b"/>
 <path d="M1150 300 L1432 150 V600 L1300 650 L1240 480 Z" fill="url(#htD)"/>
 <path d="M1180 330 L1300 290 L1330 400 L1230 440 Z" fill="url(#htL)"/>
 <path d="M580 112 L1108 42 L1120 112 L598 198 Z" fill="#1f639b"/>
 <text transform="translate(650 172) rotate(-8.500)" font-family="Liberation Sans,sans-serif" font-weight="bold" font-size="56" letter-spacing="34" fill="#80c5fb" opacity=".6">EXAKTA</text>
 <ellipse cx="940" cy="690" rx="385" ry="320" transform="rotate(-20 940 690)" fill="url(#htD)"/>
 <ellipse cx="960" cy="700" rx="340" ry="275" transform="rotate(-20 960 700)" fill="none" stroke="#80c5fb" stroke-width="12"/>
 <ellipse cx="985" cy="735" rx="300" ry="240" transform="rotate(-20 985 735)" fill="none" stroke="#80c5fb" stroke-width="9" stroke-dasharray="40 14"/>
 <ellipse cx="1010" cy="760" rx="265" ry="205" transform="rotate(-20 1010 760)" fill="#1f639b" opacity=".55"/>
 <ellipse cx="1050" cy="700" rx="150" ry="70" transform="rotate(-35 1050 700)" fill="url(#htM)"/>
 <path d="M1290 660 L1432 600 V892 H1230 Z" fill="#80c5fb"/>
 <path d="M78 862 L270 836 L530 806 L640 892 H78 Z" fill="#80c5fb"/><path d="M345 680 L400 640 L440 690 L385 725 Z" fill="#80c5fb"/><path d="M372 678 L398 662 L414 686 L388 702 Z" fill="#1f639b"/>
</g>
<g><rect x="298.500" y="192.800" width="52" height="23" fill="#aab2ab"/><rect x="298.500" y="192.800" width="52" height="23" fill="none" stroke="#000" stroke-width="1.200"/><rect x="298.500" y="210.500" width="52" height="5.500" fill="#000"/><circle cx="309.500" cy="203.500" r="7" fill="#fff" stroke="#000" stroke-width="1.500"/><text x="304.300" y="206" font-family="Liberation Sans,sans-serif" font-weight="bold" font-size="7" fill="#000">cc</text><circle cx="333.500" cy="201" r="5" fill="#fff" stroke="#000" stroke-width="1"/><rect x="332.700" y="199.600" width="1.600" height="4.500" fill="#000"/><circle cx="333.500" cy="198" r=".9" fill="#000"/><text x="329" y="215.200" font-family="Liberation Sans,sans-serif" font-size="4.200" fill="#fff">BY</text></g>
</g></svg>
 <div class="t" style="left:387.300px;top:311.9px;font-size:22px;font-weight:bold;color:#444;transform-origin:0 0;transform:scaleX(.987)">Программы сканирования в</div>
 <div class="t" style="left:387.300px;top:345.3px;font-size:22px;font-weight:bold;color:#444">Linux</div>
 <div class="meta">
  <svg class="abs" style="left:387.300px;top:391.500px" width="11" height="12" viewBox="0 0 11 12"><circle cx="5.500" cy="3" r="2.900" fill="#9a9a9a"/><path d="M0 12 V9.500 C0 7 2 6 5.500 6 C9 6 11 7 11 9.500 V12 Z" fill="#9a9a9a"/></svg>
  <div class="t" style="left:406px;top:391.4px;letter-spacing:.85px">admin</div>
  <svg class="abs" style="left:466.800px;top:391.500px" width="12" height="12" viewBox="0 0 12 12"><circle cx="6" cy="6" r="4.900" fill="none" stroke="#9a9a9a" stroke-width="1.600"/><path d="M6 3 V6.300 H8.300" fill="none" stroke="#9a9a9a" stroke-width="1.300"/></svg>
  <div class="t" style="left:482.800px;top:391.4px">Декабрь 27, 2018</div>
  <svg class="abs" style="left:614px;top:392px" width="14" height="12" viewBox="0 0 14 12"><ellipse cx="5.500" cy="4.500" rx="5.500" ry="4" fill="#9a9a9a"/><path d="M2 7 L1.200 10 L5 8 Z" fill="#9a9a9a"/><path d="M11.800 4.200 C13.200 5 14 6 14 7.200 C14 8.300 13.300 9.200 12.300 9.900 L13 12 L10.300 10.600 C8.500 10.900 6.800 10.500 5.800 9.600 C9 9.500 11.800 7.500 11.800 4.200 Z" fill="#9a9a9a"/></svg>
  <div class="t" style="left:636.700px;top:391.4px">6</div>
 </div>
 <div class="body"><div class="t" style="left:387.300px;top:428.5px">Несмотря на то, что человечество ещё не</div><div class="t" style="left:387.300px;top:452.5px">может полностью отказаться от</div><div class="t" style="left:387.300px;top:476.5px">использования бумаги, многие люди</div><div class="t" style="left:387.300px;top:500.0px">предпочитают сканировать документы,</div><div class="t" style="left:387.300px;top:524.0px">фотографии и работать с ними в</div><div class="t" style="left:387.300px;top:548.0px">электронном виде. Для сканирования</div></div>
 <!-- bell -->
 <div class="abs" style="left:20.500px;top:483.200px;width:47.200px;height:47.200px;border-radius:50%;background:#ff9a4d;box-shadow:0 3px 6px rgba(0,0,0,.3)"></div>
 <div class="abs" style="left:23.500px;top:486.200px;width:41.200px;height:41.200px;border-radius:50%;border:1.400px solid #fff"></div>
 <svg class="abs" style="left:32.600px;top:494.500px" width="23" height="25" viewBox="0 0 23 25"><path d="M11.500 0 a2 2 0 0 1 2 2 C17.500 3.200 19.300 6.500 19.300 10.500 C19.300 15 20.500 17 23 19 V20.500 H0 V19 C2.500 17 3.700 15 3.700 10.500 C3.700 6.500 5.500 3.200 9.500 2 a2 2 0 0 1 2 -2 Z M8.300 22 H14.700 a3.200 3.200 0 0 1 -6.400 0 Z" fill="#fff"/></svg>
 <!-- recaptcha -->
 <div class="abs" style="left:682.800px;top:476px;width:71px;height:61.200px;background:#f9f9f9;box-shadow:0 0 5px rgba(0,0,0,.35);border-radius:2px 0 0 2px"></div>
 <svg class="abs" style="left:699px;top:482px" width="38" height="38" viewBox="0 0 38 38"><path d="M19 3 A16 16 0 0 1 35 18.500 L35 7 L31.500 10.500 A16 16 0 0 0 19 3 Z M35 19 H24 L28.200 14.800 A11.500 11.500 0 0 0 19 10 V3 A16 16 0 0 1 35 19 Z" fill="#1c3aa9"/><path d="M19 3 V10 A9 9 0 0 0 11.500 14 L15.500 18 H3.500 V6 L7 9.500 A16 16 0 0 1 19 3 Z" fill="#4a90e2"/><path d="M3 19 H10 A9 9 0 0 0 14.500 26.500 L19 22 V34.500 H6.500 L10 31 A16 16 0 0 1 3 19 Z" fill="#bfbfbf"/><path d="M19 34.500 V28 A9 9 0 0 0 27 23.500 L35 19 C35 28 28 34.500 19 34.500 Z" fill="#b2b2b2"/></svg>
 <div class="t" style="left:690.500px;top:524px;font-size:7.600px;color:#555;letter-spacing:.1px">Privacy - Terms</div>
</div>
<div class="abs sbar"></div><div class="abs sbt"></div>
</div>

<svg class="abs" style="left:1167px;top:648px" width="13" height="21" viewBox="0 0 13 21"><path d="M.700 .700 V16.500 L4.300 13 L7 19.700 L9.500 18.600 L6.800 12 H11.800 Z" fill="#111" stroke="#fff" stroke-width="1.100" stroke-linejoin="round"/></svg>
<!-- ================= TERMINAL ================= -->
<div id="term" class="win" style="left:69px;top:575px;width:478px;height:398px">
<div class="tgrad"></div>
<div class="abs" style="left:5.5px;top:6px;width:19.5px;height:16px;border-radius:1.5px;background:#455a64"></div>
<div class="abs" style="left:7px;top:8px;width:2px;height:1px;background:#cfd8dc"></div>
<div class="title" style="left:40px;width:330px;top:9px">Терминал - linok9757@losst-pc:~</div>
<svg class="abs" style="left:390px;top:9px" width="78" height="10" viewBox="0 0 78 10"><g fill="none" stroke="#c2c2c2" stroke-width="1.5">
 <path d="M5 9.5 V1.5 M1.3 5 L5 1.3 L8.7 5"/>
 <path d="M24 8 H30" stroke-width="2"/>
 <rect x="45.8" y="1.2" width="7.4" height="7.2"/>
 <path d="M67.5 1 L75.5 9 M75.5 1 L67.5 9"/>
</g></svg>
<div class="abs menu">
 <div class="t" style="left:8px">Файл</div><div class="t" style="left:61px">Правка</div><div class="t" style="left:127px">Вид</div><div class="t" style="left:170px">Терминал</div><div class="t" style="left:254px">Вкладки</div><div class="t" style="left:331px">Справка</div>
</div>
<div class="abs body"><pre>:: Приступить к установке? [Y/n]
(1/1) проверка ключей
        [############################] 100%
(1/1) проверка целостности пакета
        [############################] 100%
(1/1) загрузка файлов пакетов
        [############################] 100%
(1/1) проверка конфликтов файлов
        [############################] 100%
(1/1) проверка доступного места
        [############################] 100%
:: Обработка изменений пакета...
(1/1) установка macos11-gtk-theme
        [############################] 100%
:: Запуск post-transaction hooks...
(1/1) Arming ConditionNeedsUpdate...
[linok9757@losst-pc ~]$ xfce4-screenshooter </pre><div class="abs cur"></div></div>
<div class="abs sb"></div><div class="abs sbt"></div>
</div>

<!-- ================= APPEARANCE ================= -->
<div id="app" class="win" style="left:0px;top:31px;width:548px;height:543px">
<div class="abs tgrad"></div>
<div class="abs" style="left:0;top:0;width:1px;height:543px;background:#5a5a5a;z-index:5"></div>
<div class="abs btab"></div>
<svg class="abs" style="left:482px;top:9px" width="58" height="12" viewBox="0 0 58 12">
 <g fill="#fff" stroke="#555" stroke-width="1" stroke-linejoin="round">
  <path d="M7 0.7 L12 5.7 L8.7 5.7 L8.7 10.5 L5.3 10.5 L5.3 5.7 L2 5.7 Z"/>
  <path fill-rule="evenodd" d="M24 0.8 H34 V10.6 H24 Z M26.3 4 H31.7 V8.3 H26.3 Z"/>
  <path d="M46.2 1 L47.8 -0.3 L51 3.2 L54.2 -0.3 L55.8 1 L52.7 5.2 L55.8 9.4 L54.2 10.7 L51 7.2 L47.8 10.7 L46.2 9.4 L49.3 5.2 Z"/>
 </g>
</svg>
<div class="title" style="left:100px;width:304px;top:10px;color:#2a2a2a">Внешний вид</div>
<svg class="abs" style="left:3.8px;top:1.8px" width="23.4" height="23.4"><use href="#fan"/></svg>
<svg class="abs" style="left:8px;top:31px" width="49" height="49"><use href="#fan"/></svg>
<div class="t h1">Внешний вид</div>
<div class="t h2">Настройки внешнего вид рабочего стола</div>
<div class="abs search"></div>
<svg class="abs" style="left:516px;top:59px" width="16" height="16" viewBox="0 0 16 16"><circle cx="6" cy="6" r="4.6" fill="none" stroke="#8a8a8a" stroke-width="1.3" stroke-dasharray="1 .6"/><path d="M9.3 9.3 L14.3 14.3" stroke="#8a8a8a" stroke-width="1.8" stroke-dasharray="1 .5"/></svg>
<div class="abs vsb"></div>
<div class="t tab" style="left:19px;top:108px;color:#3f51b5">С<u>т</u>или</div>
<div class="abs" style="left:11px;top:125px;width:57px;height:3px;background:#3f51b5"></div>
<div class="t tab" style="left:74px">З<u>н</u>ачки</div>
<div class="t tab" style="left:137px"><u>Ш</u>рифты</div>
<div class="t tab" style="left:210px"><u>Н</u>астройки</div>
<div class="abs nb"></div>
<div class="abs list"><div class="in">
<div class="row" style="top:-10px"><span class="sw"><i style="background:#d3d7cf"></i><i style="background:#000000"></i><i style="background:#75507b"></i></span><span class="nm">Crux</span></div>
<div class="row" style="top:16px"><span class="sw"><i style="background:#dedede"></i><i style="background:#4d4d4d"></i><i style="background:#4a90d9"></i></span><span class="nm">elementary</span></div>
<div class="row" style="top:42px"><span class="sw"><i style="background:#f4f4f4"></i><i style="background:#000000"></i><i style="background:#637f9f"></i></span><span class="nm">Industrial</span></div>
<div class="row" style="top:68px"><span class="sw"><i style="background:#f2f3f7"></i><i style="background:#5a5d6b"></i><i style="background:#4a8ee0"></i></span><span class="nm">macOS11</span></div>
<div class="row" style="top:94px"><span class="sw"><i style="background:#eaeaea"></i><i style="background:#000000"></i><i style="background:#729fcf"></i></span><span class="nm">Mist</span></div>
<div class="row" style="top:120px"><span class="sw"><i style="background:#dfe3ee"></i><i style="background:#4c5a66"></i><i style="background:#8fa1b3"></i></span><span class="nm">Numix-Ocean-Ocean</span></div>
<div class="row" style="top:146px"><span class="sw"><i style="background:#f7f7f7"></i><i style="background:#111111"></i><i style="background:#3f51b5"></i></span><span class="nm">Plata</span></div>
<div class="row sel" style="top:172px"><span class="sw"><i style="background:#f7f7f7"></i><i style="background:#111111"></i><i style="background:#3f51b5"></i></span><span class="nm">Plata-Compact</span></div>
<div class="row" style="top:198px"><span class="sw"><i style="background:#f7f7f7"></i><i style="background:#111111"></i><i style="background:#3f51b5"></i></span><span class="nm">Plata-Lumine</span></div>
<div class="row" style="top:224px"><span class="sw"><i style="background:#f7f7f7"></i><i style="background:#111111"></i><i style="background:#3f51b5"></i></span><span class="nm">Plata-Lumine-Compact</span></div>
<div class="row" style="top:250px"><span class="sw"><i style="background:#1c1c1c"></i><i style="background:#f2f2f2"></i><i style="background:#3f51b5"></i></span><span class="nm">Plata-Noir</span></div>
<div class="row" style="top:276px"><span class="sw"><i style="background:#1c1c1c"></i><i style="background:#f2f2f2"></i><i style="background:#3f51b5"></i></span><span class="nm">Plata-Noir-Compact</span></div>
<div class="row" style="top:302px"><span class="sw"></span><span class="nm">Raleigh</span></div>
<div class="row" style="top:328px"><span class="sw"><i style="background:#d4d0c8"></i><i style="background:#000000"></i><i style="background:#0a246a"></i></span><span class="nm">Redmond</span></div>
</div></div>
<div class="abs isb"></div>
<div class="abs foot"></div>
<div class="t btn" style="left:51px;font-weight:normal;font-size:15px;top:509px;color:#666">?</div>
<div class="t btn" style="left:68px">Справка</div>
<svg class="abs" style="left:238px;top:511px" width="13" height="12" viewBox="0 0 13 12"><path d="M6.5 1 L1.5 6 L6.5 11 M1.8 6 H12.5" fill="none" stroke="#666" stroke-width="1.8"/></svg>
<div class="t btn" style="left:256px">Все настройки</div>
<svg class="abs" style="left:423px;top:512px" width="9" height="9" viewBox="0 0 9 9"><path d="M1 1 L8 8 M8 1 L1 8" fill="none" stroke="#666" stroke-width="1.7"/></svg>
<div class="t btn" style="left:440px">Закрыть</div>
</div>

<!-- ================= DOCK ================= -->
<div id="dock" class="abs" style="left:807px;top:926px;width:306px;height:49px;background:#000">
<svg class="abs" style="left:0;top:0" width="306" height="49" viewBox="807 926 306 49">
 <rect x="813.700" y="934.700" width="36.600" height="32.800" rx="2" fill="#f4bd70"/><path d="M813.700 938.300 V936.700 a2 2 0 0 1 2 -2 H848.300 a2 2 0 0 1 2 2 V938.300 Z" fill="#fff"/><rect x="813.700" y="966.300" width="36.600" height="1.200" fill="#d9a358"/>
 <path d="M836.300 949 H842.500 L847 953.500 V964.300 H836.300 Z" fill="#ececec"/><path d="M842.500 949 L847 953.500 H842.500 Z" fill="#fff"/>
 <rect x="869.700" y="934.700" width="36.500" height="32.800" rx="2" fill="#455a64"/><rect x="869.700" y="966.300" width="36.500" height="1.200" fill="#37474f"/>
 <text x="872.800" y="944.800" font-family="DejaVu Sans Mono,Liberation Mono,monospace" font-size="7.500" font-weight="bold" fill="#eceff1">$_</text>
 <svg x="916.700" y="935.800" width="38.600" height="33" viewBox="0 0 56 47" preserveAspectRatio="none"><use href="#folder"/></svg>
 <rect x="929.300" y="946.800" width="13.500" height="2.400" rx="1.200" fill="#fff"/>
 <circle cx="984.200" cy="950.800" r="18.300" fill="#5c6bc0"/><path d="M971.260 963.740 A18.300 18.300 0 0 1 997.140 937.860 Z" fill="#8490d4"/>
 <path d="M996.700 938.300 L986.300 953 L982 948.700 Z" fill="#f44336"/><path d="M971.700 963.300 L986.300 953 L982 948.700 Z" fill="#fff"/>
 <circle cx="1030.800" cy="948.300" r="9.300" fill="none" stroke="#5b5e6d" stroke-width="3"/><path d="M1037.500 955.300 L1043.800 962" stroke="#5b5e6d" stroke-width="3.300" stroke-linecap="round"/>
 <svg x="1070" y="935.800" width="36.300" height="31.400" viewBox="0 0 56 47" preserveAspectRatio="none"><use href="#folder"/></svg>
</svg></div>

<!-- ================= PANEL ================= -->
<div id="panel" class="abs">
<svg class="abs" style="left:2px;top:3px" width="24" height="24" viewBox="0 0 24 24"><g stroke-linecap="round"><path d="M3.500 4 L20.500 20.500 M20.500 4 L3.500 20.500" stroke="#3aa0d8" stroke-width="5.500"/><path d="M3.500 4 L9 9.300 M20.500 4 L15 9.300" stroke="#d6eefb" stroke-width="4"/></g><path d="M3 10.500 C6 9 9 9.500 11.500 10.800 C13.500 9.800 16 9.500 18 10 L19 8 L20 10.300 C21.500 11 22.500 12 23 13 C21 14 19 14.300 17 14 L16 16.500 L14.500 14 C11 14.800 7 14.500 4.500 13.500 L2.500 16 L2.800 12.800 C1.500 12.300 1 11.500 3 10.500 Z" fill="#0a0a0a" stroke="#fff" stroke-width=".5"/></svg>
<div class="t" style="left:28px;top:7.500px;font-weight:bold;font-size:13px">Приложения</div>
<div class="abs" style="left:133px;top:4px;width:1px;height:22px;background:#1c1c1c"></div>
<svg class="abs" style="left:140px;top:7px" width="16" height="16" viewBox="0 0 20 20"><use href="#ffx"/></svg>
<div class="t" style="left:162px">Losst - Linux Open Sourc...</div>
<svg class="abs" style="left:340.500px;top:9px" width="15" height="12.500" viewBox="0 0 18 16" preserveAspectRatio="none"><rect width="18" height="16" rx="1.500" fill="#ff8a65"/><rect y="11" width="18" height="5" rx="1" fill="#ec407a"/><rect y="9.600" width="18" height="1.600" fill="#5d3a2e"/><circle cx="12.500" cy="5.500" r="2.300" fill="#fff3e0"/></svg>
<div class="t" style="left:362px">Crow.jpg - Просмотр из...</div>
<svg class="abs" style="left:541px;top:9.500px" width="14.500" height="12" viewBox="0 0 56 47" preserveAspectRatio="none"><use href="#folder"/></svg>
<div class="t" style="left:562px">Файловая система - Фа...</div>
<svg class="abs" style="left:738px;top:6px" width="19" height="19"><use href="#fan"/></svg>
<div class="t" style="left:762.500px">Внешний вид</div>
<div class="abs" style="left:738px;top:28px;width:199px;height:2px;background:#3f51b5"></div>
<div class="abs" style="left:940px;top:8px;width:16px;height:14px;border-radius:1.500px;background:#455a64"></div>
<svg class="abs" style="left:942px;top:11px" width="10" height="8" viewBox="0 0 10 8"><path d="M.500 1 L3.500 3.500 L.500 6 M5 6.500 H9" stroke="#eceff1" stroke-width="1.100" fill="none"/></svg>
<div class="t" style="left:962px">Терминал - linok9757@l...</div>
<!-- pager -->
<div class="abs" style="left:1708.500px;top:1px;width:57.500px;height:28.500px;background:#3c3f6e"></div>
<div class="abs" style="left:1766.500px;top:0;width:59px;height:29.500px;background:#0b0b0b;border:1px solid #161616"></div>
<div class="abs" style="left:1711px;top:17.500px;width:14px;height:11.500px;background:#3f4fb5;border:1px solid #fff"></div>
<div class="abs" style="left:1725px;top:2px;width:18.500px;height:13.500px;background:#3f4fb5;border:1px solid #fff"></div>
<div class="abs" style="left:1725px;top:15px;width:19px;height:12px;background:#3f4fb5;border:1px solid #fff"></div>
<div class="abs" style="left:1743.500px;top:3px;width:23px;height:19px;background:#3f4fb5;border:1px solid #fff"></div>
<div class="abs" style="left:1709px;top:2px;width:15.500px;height:15.500px;background:#6672d8;border:1px solid #fff"></div>
<svg class="abs" style="left:1746.500px;top:4.500px" width="15.500" height="15.500" viewBox="0 0 20 20"><use href="#ffx"/></svg>
<div class="t" style="left:1830.500px;top:9px;font-family:'DejaVu Serif','Liberation Serif',serif;font-weight:bold;font-size:12px;letter-spacing:.55px;color:#fff">19:50</div>
<svg class="abs" style="left:1883px;top:2px" width="35" height="26" viewBox="0 0 35 26"><rect width="35" height="26" fill="#fff"/><g fill="#c8102e"><rect y="0" width="35" height="2"/><rect y="4" width="35" height="2"/><rect y="8" width="35" height="2"/><rect y="12" width="35" height="2"/><rect y="16" width="35" height="2"/><rect y="20" width="35" height="2"/><rect y="24" width="35" height="2"/></g><rect width="14" height="14" fill="#0a2d6e"/><g fill="#fff" opacity=".8"><circle cx="2" cy="2" r=".7"/><circle cx="5.300" cy="2" r=".7"/><circle cx="8.600" cy="2" r=".7"/><circle cx="12" cy="2" r=".7"/><circle cx="3.600" cy="4.500" r=".7"/><circle cx="7" cy="4.500" r=".7"/><circle cx="10.300" cy="4.500" r=".7"/><circle cx="2" cy="7" r=".7"/><circle cx="5.300" cy="7" r=".7"/><circle cx="8.600" cy="7" r=".7"/><circle cx="12" cy="7" r=".7"/><circle cx="3.600" cy="9.500" r=".7"/><circle cx="7" cy="9.500" r=".7"/><circle cx="10.300" cy="9.500" r=".7"/><circle cx="2" cy="12" r=".7"/><circle cx="5.300" cy="12" r=".7"/><circle cx="8.600" cy="12" r=".7"/><circle cx="12" cy="12" r=".7"/></g></svg>
</div>
</body>
</html>
